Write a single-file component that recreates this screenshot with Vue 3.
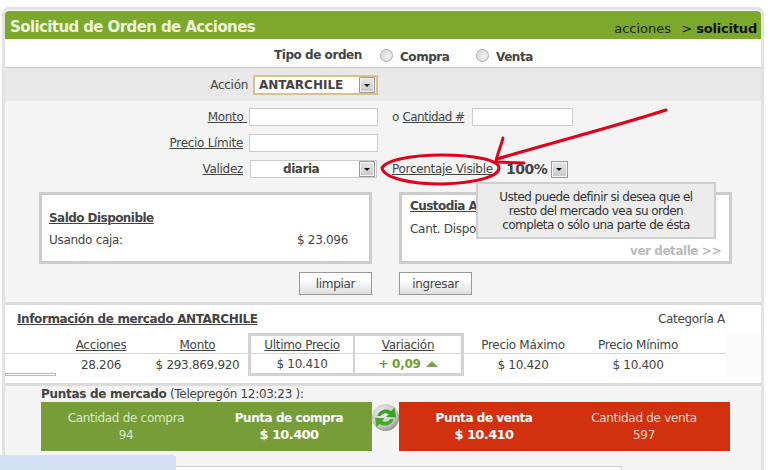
<script setup>
const head = [
  { t: 'Acciones', u: true },
  { t: 'Monto', u: true },
  { t: 'Ultimo Precio', u: true, c: 'box-a' },
  { t: 'Variación', u: true, c: 'box-b' },
  { t: 'Precio Máximo' },
  { t: 'Precio Mínimo' },
]
const vals = [
  { t: '28.206' },
  { t: '$ 293.869.920' },
  { t: '$ 10.410', c: 'box-a' },
  { t: '+ 0,09', c: 'box-b up' },
  { t: '$ 10.420' },
  { t: '$ 10.400' },
]
</script>

<template>
  <div class="page">
    <div class="frame">
      <header class="head">
        <h1>Solicitud de Orden de Acciones</h1>
        <div class="crumb">acciones <span class="gt">&gt;</span> <b>solicitud</b></div>
      </header>

      <div class="tipo">
        <b class="tipo-l">Tipo de orden</b>
        <span class="radio"></span><b class="opt">Compra</b>
        <span class="radio r2"></span><b class="opt">Venta</b>
      </div>

      <div class="accion">
        <span class="accion-l">Acción</span>
        <div class="sel-main">
          <b>ANTARCHILE</b>
          <span class="drop"></span>
        </div>
      </div>

      <section class="form">
        <div class="row">
          <u class="lbl monto">Monto&nbsp;</u>
          <span class="inp w129"></span>
          <span class="o">o <u>Cantidad #</u></span>
          <span class="inp w101"></span>
        </div>
        <div class="row">
          <u class="lbl">Precio Límite</u>
          <span class="inp w129"></span>
        </div>
        <div class="row">
          <u class="lbl">Validez</u>
          <div class="sel-val"><b>diaria</b><span class="drop"></span></div>
          <u class="pct-l">Porcentaje Visible</u>
          <b class="pct">100%</b>
          <span class="drop solo"></span>
        </div>

        <div class="cards">
          <div class="card">
            <b class="card-t">Saldo Disponible</b>
            <div class="card-r"><span>Usando caja:</span><span>$ 23.096</span></div>
          </div>
          <div class="card cust">
            <b class="card-t">Custodia A</b>
            <div class="card-r"><span>Cant. Dispo</span></div>
            <b class="more">ver detalle &gt;&gt;</b>
          </div>
        </div>

        <div class="btns">
          <button type="button">limpiar</button>
          <button type="button">ingresar</button>
        </div>
      </section>

      <section class="mkt">
        <div class="mkt-top">
          <b class="mkt-t">Información de mercado ANTARCHILE</b>
          <span>Categoría A</span>
        </div>
        <div class="tbl">
          <span class="blank"></span>
          <span v-for="h in head" :key="h.t" class="th" :class="h.c"><u v-if="h.u">{{ h.t }}</u><template v-else>{{ h.t }}</template></span>
          <span class="blank"></span>
          <span class="tint"></span>
          <span class="blank v"><i class="bar"></i></span>
          <span v-for="v in vals" :key="v.t" class="td" :class="v.c">{{ v.t }}<i v-if="v.c === 'box-b up'" class="tri"></i></span>
        </div>
      </section>

      <section class="puntas">
        <div class="p-t"><b>Puntas de mercado</b> (Telepregón 12:03:23 ):</div>
        <div class="p-row">
          <div class="p-bar green">
            <div class="p-c c1"><span>Cantidad de compra</span><span>94</span></div>
            <div class="p-c c2"><b>Punta de compra</b><b class="big">$ 10.400</b></div>
          </div>
          <svg class="refresh" viewBox="0 0 27 27" width="27" height="27" aria-hidden="true">
            <defs>
              <radialGradient id="rg" cx="40%" cy="35%" r="70%">
                <stop offset="0" stop-color="#f2f2f2" />
                <stop offset="0.7" stop-color="#c4c6c0" />
                <stop offset="1" stop-color="#868b84" />
              </radialGradient>
            </defs>
            <circle cx="13.5" cy="13.5" r="13.5" fill="url(#rg)" />
            <path d="M5.5 12 C6.5 6 14 3.5 19.5 7 L22.5 3.5 L24 13.5 L14 13 L16.8 10.2 C13.5 8.5 10 9.5 9 12 Z" fill="#3f9e2c" />
            <path d="M21.5 15 C20.5 21 13 23.5 7.5 20 L4.5 23.5 L3 13.8 L13 14.2 L10.2 16.8 C13.5 18.5 17 17.5 18 15 Z" fill="#4aa832" />
          </svg>
          <div class="p-bar red">
            <div class="p-c c3"><b>Punta de venta</b><b class="big">$ 10.410</b></div>
            <div class="p-c c4"><span>Cantidad de venta</span><span>597</span></div>
          </div>
        </div>
        <div class="lower"></div>
      </section>
    </div>

    <div class="tip">Usted puede definir si desea que el<br />resto del mercado vea su orden<br />completa o sólo una parte de ésta</div>
    <div class="blue"></div>

    <svg class="mark" viewBox="0 0 771 470" width="771" height="470" aria-hidden="true">
      <g fill="none" stroke="#e2001a" stroke-linecap="round">
        <path stroke-width="3" d="M382 168 C386 160 412 155 442 155 C474 155 499 160 499 168 C499 176 478 183 442 184 C410 184 384 178 382 168 Z" />
        <path stroke-width="3" d="M666 110 C610 128 550 143 497 159" />
        <path stroke-width="3" d="M503 138 C501 146 498 152 496 161" />
        <path stroke-width="3" d="M497 162 L524 163" />
      </g>
    </svg>
  </div>
</template>

<style>
html, body { margin: 0; background: #fff; }
</style>

<style scoped>
.page {
  position: relative;
  width: 771px;
  height: 470px;
  overflow: hidden;
  background: #fff;
  font: 12px/14px "DejaVu Sans", Verdana, sans-serif;
  letter-spacing: -0.3px;
  color: #444;
}
.page b { letter-spacing: -0.45px; }
.frame {
  box-sizing: border-box;
  width: 762px;
  margin: 7px 0 0 2px;
  padding-top: 1px;
  border: 3px solid #e3e3e3;
  border-bottom: 0;
  border-radius: 7px 7px 0 0;
  background: #fff;
}
.head {
  height: 28px;
  box-sizing: border-box;
  display: flex;
  justify-content: space-between;
  align-items: center;
  padding: 0 4px 0 5px;
  background: #7ca82c;
  border-radius: 4px 4px 0 0;
}
h1 {
  margin: 3px 0 0;
  font-size: 15px;
  line-height: 20px;
  font-weight: 700;
  letter-spacing: -0.6px;
  color: #eef4dc;
}
.crumb {
  font-size: 13px;
  letter-spacing: 0;
  color: #1c2408;
  padding-top: 7px;
}
.crumb .gt { margin-left: 6px; }
.crumb b { color: #111; letter-spacing: -0.2px; }
.tipo {
  box-sizing: content-box;
  height: 24px;
  padding-top: 4px;
  padding-left: 269px;
  display: flex;
  align-items: center;
  border-bottom: 1px solid #c9c9c9;
  font-size: 12px;
}
.tipo-l { width: 106px; margin-top: -1px; }
.radio {
  width: 11px;
  height: 11px;
  border-radius: 50%;
  border: 1px solid #aaa;
  background: radial-gradient(circle at 60% 60%, #f4f4f4, #c8c8c8);
  box-shadow: inset 0 0 0 1px #e8e8e8;
  margin-right: 8px;
}
.r2 { margin-left: 26px; margin-right: 8px; }
.opt { margin-top: 3px; margin-left: -1px; }
.tipo .opt:nth-of-type(2) { width: 50px; }
.accion {
  height: 33px;
  display: flex;
  align-items: center;
  background: #e9e9e9;
}
.accion-l {
  width: 248px;
  text-align: right;
  padding-right: 5px;
  padding-top: 1px;
  box-sizing: border-box;
}
.sel-main {
  box-sizing: border-box;
  width: 125px;
  height: 20px;
  display: flex;
  align-items: center;
  justify-content: space-between;
  padding: 0 1px 0 4px;
  background: #fff;
  border: 2px solid #dcc08a;
  margin-top: 1px;
}
.page .sel-main b { font-size: 12px; color: #444; letter-spacing: 0; }
.drop {
  box-sizing: border-box;
  position: relative;
  display: block;
  width: 16px;
  height: 16px;
  border: 1px solid #9c9c9c;
  background: linear-gradient(#e6e6e6, #c8c8c8);
  box-shadow: inset 0 0 0 1px #f4f4f4;
}
.drop::after {
  content: "";
  position: absolute;
  left: 4px;
  top: 6px;
  border: 3px solid transparent;
  border-top: 3px solid #111;
  border-bottom: 0;
}
.solo { width: 17px; height: 17px; }
.form {
  background: #f4f4f4;
  padding-top: 7px;
  height: 194px;
  border-bottom: 3px solid #dcdcdc;
}
.row {
  display: flex;
  align-items: center;
  height: 18px;
  margin-bottom: 8px;
}
.lbl {
  width: 238px;
  text-align: right;
  margin-right: 6px;
  flex: none;
}
.lbl.monto { width: 242px; margin-right: 2px; }
.inp {
  box-sizing: border-box;
  display: block;
  height: 18px;
  border: 1px solid #ccc;
  background: #fff;
}
.w129 { width: 129px; }
.w101 { width: 101px; }
.o { margin-left: 14px; width: 80px; white-space: nowrap; }
.o u { letter-spacing: -0.6px; }
.sel-val {
  box-sizing: border-box;
  width: 127px;
  height: 18px;
  margin-left: 1px;
  display: flex;
  align-items: center;
  justify-content: space-between;
  padding: 0 1px 0 32px;
  background: #fff;
  border: 1px solid #ccc;
}
.pct-l { margin-left: 15px; width: 114px; }
.page .pct { font-size: 14px; color: #444; width: 45px; letter-spacing: -0.5px; }
.cards {
  display: flex;
  gap: 27px;
  padding-left: 34px;
  margin-top: 14px;
}
.card {
  box-sizing: border-box;
  position: relative;
  width: 333px;
  height: 72px;
  padding: 16px 7px 0;
  background: #fff;
  border: 3px solid #ccc;
}
.cust { padding: 4px 8px 0; }
.card-t {
  display: block;
  text-decoration: underline;
  font-size: 12px;
}
.page .card-t { letter-spacing: -0.55px; }
.card-r {
  display: flex;
  justify-content: space-between;
  margin-top: 8px;
  padding-right: 14px;
}
.cust .card-r { margin-top: 9px; }
.more {
  position: absolute;
  right: 8px;
  bottom: 3px;
  color: #bbb;
}
.btns {
  display: flex;
  gap: 27px;
  padding-left: 294px;
  margin-top: 8px;
}
button {
  box-sizing: border-box;
  width: 73px;
  height: 23px;
  padding: 0;
  border: 1px solid #999;
  background: linear-gradient(#fff 30%, #dedede);
  font: 12px/14px "DejaVu Sans", Verdana, sans-serif;
  letter-spacing: -0.3px;
  color: #444;
}
.mkt {
  height: 72px;
  padding-top: 6px;
  box-sizing: content-box;
  background: #fff;
  border-bottom: 3px solid #dcdcdc;
}
.mkt-top {
  display: flex;
  justify-content: space-between;
  padding: 0 36px 0 12px;
  height: 16px;
  align-items: center;
}
.page .mkt-t { text-decoration: underline; letter-spacing: -0.38px; }
.tbl {
  display: grid;
  grid-template-columns: 50px 92px 101px 105px 111px 118px 112px 32px 1fr;
  grid-template-rows: 21px 22px;
  margin-top: 6px;
  text-align: center;
}
.th {
  display: flex;
  align-items: center;
  justify-content: center;
  border-bottom: 1px solid #d4d4d4;
  padding-top: 4px;
}
.td {
  display: flex;
  align-items: center;
  justify-content: center;
  padding-bottom: 1px;
}
.tint {
  grid-row: span 2;
  background: #fbfbfb;
}
.blank { border-bottom: 1px solid #d4d4d4; }
.blank.v {
  position: relative;
  border: 0;
}
.bar {
  position: absolute;
  left: 0;
  bottom: 0;
  box-sizing: border-box;
  width: 51px;
  height: 3px;
  border: 1px solid #bbb;
  background: #fff;
}
.box-a, .box-b { border-left: 3px solid #d2d2d2; box-sizing: border-box; }
.th.box-a, .th.box-b { border-top: 3px solid #d2d2d2; padding-top: 1px; }
.td.box-a, .td.box-b { border-bottom: 3px solid #d2d2d2; padding-bottom: 0; padding-top: 1px; }
.box-b { border-left-width: 2px; border-right: 3px solid #d2d2d2; }
.up { color: #6f9e2c; font-weight: 700; }
.tri {
  margin-left: 5px;
  border: 6px solid transparent;
  border-top: 0;
  border-bottom: 6px solid #7d9e5a;
}
.puntas {
  background: #f4f4f4;
  height: 84px;
  position: relative;
}
.p-t { padding: 1px 0 0 36px; height: 15px; }
.page .p-t b { letter-spacing: -0.3px; }
.p-row {
  display: flex;
  padding-left: 36px;
  height: 49px;
}
.p-bar {
  width: 331px;
  display: flex;
  flex: none;
  text-align: center;
  align-items: center;
}
.green { background: #769d38; color: #dbe8c8; }
.red { background: #d2310f; color: #f3d5cc; }
.p-bar b { color: #fff; }
.page .p-bar .big { font-size: 13px; letter-spacing: -0.6px; }
.p-c { display: flex; flex-direction: column; gap: 3px; }
.c1 { width: 170px; }
.p-c.c2 { width: 156px; }
.p-c.c3 { width: 170px; }
.p-c.c4 { width: 150px; }
.refresh { flex: none; margin-top: 2px; }
.lower {
  box-sizing: border-box;
  width: 581px;
  height: 20px;
  margin: 15px 0 0 36px;
  background: #fff;
  border: 1px solid #ccc;
}
.tip {
  position: absolute;
  left: 476px;
  top: 182px;
  box-sizing: border-box;
  width: 240px;
  height: 57px;
  padding-top: 6px;
  text-align: center;
  letter-spacing: -0.55px;
  background: #ececec;
  border: 2px solid #cfcfcf;
  color: #333;
}
.blue {
  position: absolute;
  left: 0;
  top: 455px;
  width: 176px;
  height: 15px;
  background: #d2e0f4;
  border-radius: 0 3px 0 0;
}
.mark {
  position: absolute;
  left: 0;
  top: 0;
  pointer-events: none;
}
</style>
